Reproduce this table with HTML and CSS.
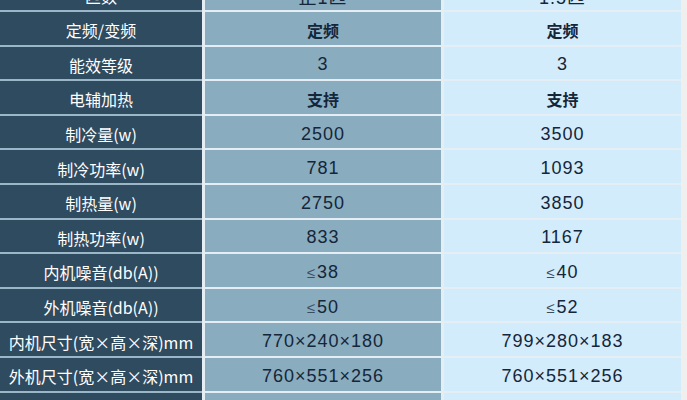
FILE: index.html
```html
<!DOCTYPE html>
<html lang="zh">
<head>
<meta charset="utf-8">
<link rel="stylesheet" href="styles.css">
</head>
<body>
<div class="table">
  <div class="cell c1">匹数</div><div class="cell c2">正1匹</div><div class="cell c3">1.5匹</div>
  <div class="cell c1">定频/变频</div><div class="cell c2 cn">定频</div><div class="cell c3 cn">定频</div>
  <div class="cell c1">能效等级</div><div class="cell c2">3</div><div class="cell c3">3</div>
  <div class="cell c1">电辅加热</div><div class="cell c2 cn">支持</div><div class="cell c3 cn">支持</div>
  <div class="cell c1">制冷量(w)</div><div class="cell c2">2500</div><div class="cell c3">3500</div>
  <div class="cell c1">制冷功率(w)</div><div class="cell c2">781</div><div class="cell c3">1093</div>
  <div class="cell c1">制热量(w)</div><div class="cell c2">2750</div><div class="cell c3">3850</div>
  <div class="cell c1">制热功率(w)</div><div class="cell c2">833</div><div class="cell c3">1167</div>
  <div class="cell c1">内机噪音(db(A))</div><div class="cell c2"><span class="le">≤</span>38</div><div class="cell c3"><span class="le">≤</span>40</div>
  <div class="cell c1">外机噪音(db(A))</div><div class="cell c2"><span class="le">≤</span>50</div><div class="cell c3"><span class="le">≤</span>52</div>
  <div class="cell c1">内机尺寸(宽×高×深)mm</div><div class="cell c2">770×240×180</div><div class="cell c3">799×280×183</div>
  <div class="cell c1">外机尺寸(宽×高×深)mm</div><div class="cell c2">760×551×256</div><div class="cell c3">760×551×256</div>
  <div class="cell c1"></div><div class="cell c2"></div><div class="cell c3"></div>
</div>
</body>
</html>
```
FILE: styles.css
```css
html, body {
  margin: 0;
  padding: 0;
  background: #f1efed;
  overflow: hidden;
}
.table {
  display: grid;
  grid-template-columns: 202px 236px 237px;
  grid-auto-rows: 32.6px;
  column-gap: 3px;
  row-gap: 2px;
  width: 681px;
  margin-top: -22.6px;
  background: #e4eef4;
}
.cell {
  display: flex;
  align-items: center;
  justify-content: center;
  padding-top: 4px;
  box-sizing: border-box;
  font-family: "Liberation Sans", "Noto Sans CJK SC", sans-serif;
  font-size: 18px;
  letter-spacing: 1px;
  white-space: nowrap;
}
.c1 {
  background: #2f4b60;
  color: #ffffff;
  font-family: "Noto Sans CJK SC", sans-serif;
  font-size: 16px;
  letter-spacing: 0;
  box-shadow: 0 2px 0 #9bb6c7;
}
.c2 {
  background: #8aacbf;
  color: #14263a;
}
.c3 {
  background: #d3ecfb;
  color: #14263a;
}
.cn {
  font-family: "Noto Sans CJK SC", sans-serif;
  font-weight: 700;
  font-size: 16px;
  letter-spacing: 0;
}
.le {
  font-size: 15px;
  color: #3b4d60;
  margin-right: 1px;
}
```
